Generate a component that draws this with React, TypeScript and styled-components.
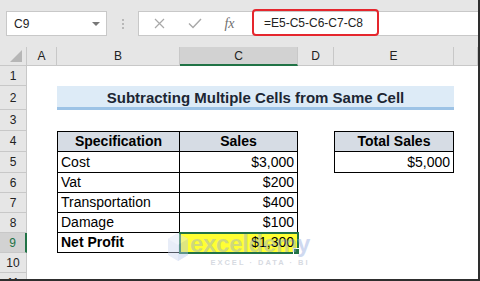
import React from "react";
import styled, { createGlobalStyle, css } from "styled-components";

const GlobalStyle = createGlobalStyle`
  html, body { margin: 0; padding: 0; background: #fff; }
  #root { width: 480px; height: 281px; }
`;

const Frame = styled.div`
  position: relative;
  width: 480px;
  height: 281px;
  box-sizing: border-box;
  border-right: 2px solid #2e2e2e;
  border-bottom: 2px solid #2e2e2e;
  background: #e6e6e6;
  display: flex;
  flex-direction: column;
  overflow: hidden;
  font-family: "Liberation Sans", Arial, sans-serif;
  color: #000;
`;

const Toolbar = styled.div`
  height: 47px;
  flex: none;
  box-sizing: border-box;
  padding: 11px 0 0 6px;
  display: flex;
  align-items: flex-start;
`;

const NameBox = styled.div`
  width: 101px;
  height: 25px;
  box-sizing: border-box;
  background: #fff;
  border: 1px solid #c8c8c8;
  display: flex;
  align-items: center;
  justify-content: space-between;
  padding: 0 6px 0 7px;
  font-size: 12px;
  color: #222;
`;

const Caret = styled.span`
  width: 0;
  height: 0;
  border-left: 4px solid transparent;
  border-right: 4px solid transparent;
  border-top: 4px solid #777;
`;

const Grip = styled.div`
  width: 31px;
  height: 25px;
  display: flex;
  flex-direction: column;
  align-items: center;
  justify-content: center;
  gap: 2px;
`;

const Dot = styled.span`
  width: 2px;
  height: 2px;
  background: #b8b8b8;
`;

const FormulaBar = styled.div`
  flex: 1;
  height: 25px;
  box-sizing: border-box;
  background: #fff;
  border: 1px solid #c8c8c8;
  border-right: none;
  display: flex;
  align-items: flex-start;
  padding-left: 3px;
`;

const IconSlot = styled.span`
  width: 35px;
  height: 23px;
  display: flex;
  align-items: center;
  justify-content: center;
  color: #9c9c9c;
`;

const Fx = styled.span`
  font-family: "Liberation Serif", "Times New Roman", serif;
  font-style: italic;
  font-size: 14px;
  color: #6f6f6f;
`;

const FormulaHighlight = styled.div`
  margin-top: -3px;
  margin-left: 5px;
  width: 127px;
  height: 27px;
  box-sizing: border-box;
  border: 2px solid #e5262d;
  border-radius: 4px;
  display: flex;
  align-items: center;
  padding-left: 10px;
  font-size: 12px;
  color: #222;
`;

const Sheet = styled.div`
  flex: 1;
  position: relative;
  display: grid;
  background: #fff;
  grid-template-columns: 27px 30px 123px 118px 36px 120px 1fr;
  grid-template-rows: 19px 20px 24px 21px 21px 21px 20px 20px 20px 20px 20px 20px;
  overflow: hidden;
`;

const Corner = styled.div`
  position: relative;
  background: #e6e6e6;
  border-right: 1px solid #c8c8c8;
  border-bottom: 1px solid #c8c8c8;
  &::after {
    content: "";
    position: absolute;
    right: 4px;
    bottom: 3px;
    width: 0;
    height: 0;
    border-left: 12px solid transparent;
    border-bottom: 12px solid #b6b6b6;
  }
`;

const ColHead = styled.div<{ $active?: boolean }>`
  box-sizing: border-box;
  background: ${(p) => (p.$active ? "#d2d2d2" : "#e6e6e6")};
  border-right: 1px solid #c8c8c8;
  border-bottom: ${(p) => (p.$active ? "2px solid #217346" : "1px solid #c8c8c8")};
  display: flex;
  align-items: center;
  justify-content: center;
  font-size: 12px;
  color: #222;
`;

const RowHead = styled.div<{ $active?: boolean }>`
  box-sizing: border-box;
  background: ${(p) => (p.$active ? "#d2d2d2" : "#e6e6e6")};
  border-right: ${(p) => (p.$active ? "2px solid #217346" : "1px solid #c8c8c8")};
  border-bottom: 1px solid #c8c8c8;
  display: flex;
  align-items: center;
  justify-content: center;
  font-size: 12px;
  color: ${(p) => (p.$active ? "#217346" : "#222")};
`;

type Align = "left" | "right" | "center";

const Cell = styled.div<{
  $align?: Align;
  $bold?: boolean;
  $head?: boolean;
  $boxed?: boolean;
  $top?: boolean;
  $left?: boolean;
  $selected?: boolean;
}>`
  position: relative;
  box-sizing: border-box;
  display: flex;
  align-items: flex-end;
  padding: 0 3px 2px 3px;
  font-size: 14px;
  white-space: nowrap;
  justify-content: ${(p) =>
    p.$align === "right" ? "flex-end" : p.$align === "center" ? "center" : "flex-start"};
  font-weight: ${(p) => (p.$bold ? 700 : 400)};
  background: ${(p) => (p.$selected ? "#ffff33" : p.$head ? "#d6dce4" : "transparent")};
  ${(p) =>
    p.$boxed &&
    css`
      border-right: 1px solid #000;
      border-bottom: 1px solid #000;
    `}
  ${(p) => p.$top && css`border-top: 1px solid #000;`}
  ${(p) => p.$left && css`border-left: 1px solid #000;`}
  ${(p) =>
    p.$selected &&
    css`
      outline: 2px solid #217346;
      outline-offset: -1px;
      &::after {
        content: "";
        position: absolute;
        right: -3px;
        bottom: -3px;
        width: 5px;
        height: 5px;
        background: #217346;
        border: 1px solid #fff;
      }
    `}
`;

const Title = styled.div`
  grid-column: span 4;
  box-sizing: border-box;
  background: #ddebf7;
  border-bottom: 3px solid #9dc3e6;
  display: flex;
  align-items: center;
  justify-content: center;
  font-size: 15px;
  font-weight: 700;
  color: #1c2633;
  padding-top: 2px;
`;

const Watermark = styled.div`
  position: absolute;
  left: 167px;
  top: 185px;
  display: flex;
  align-items: flex-start;
  gap: 1px;
  pointer-events: none;
  opacity: 0.42;
`;

const WmText = styled.div`
  display: flex;
  flex-direction: column;
  align-items: center;
`;

const WmWord = styled.span`
  font-family: "Liberation Sans", Arial, sans-serif;
  font-weight: 700;
  font-size: 24px;
  line-height: 24px;
  color: #8fa6dc;
  letter-spacing: -0.3px;
`;

const WmTag = styled.span`
  font-family: "Liberation Sans", Arial, sans-serif;
  font-weight: 700;
  font-size: 7.5px;
  letter-spacing: 2px;
  color: #a0a8b8;
  margin-top: 2px;
  padding-left: 20px;
`;

type C = {
  text?: string;
  align?: Align;
  bold?: boolean;
  head?: boolean;
  boxed?: boolean;
  top?: boolean;
  left?: boolean;
  selected?: boolean;
};

const cols = ["A", "B", "C", "D", "E", "F"];

const data: Record<number, Record<string, C>> = {
  4: {
    B: { text: "Specification", align: "center", bold: true, head: true, boxed: true, top: true, left: true },
    C: { text: "Sales", align: "center", bold: true, head: true, boxed: true, top: true },
    E: { text: "Total Sales", align: "center", bold: true, head: true, boxed: true, top: true, left: true },
  },
  5: {
    B: { text: "Cost", boxed: true, left: true },
    C: { text: "$3,000", align: "right", boxed: true },
    E: { text: "$5,000", align: "right", boxed: true, left: true },
  },
  6: {
    B: { text: "Vat", boxed: true, left: true },
    C: { text: "$200", align: "right", boxed: true },
  },
  7: {
    B: { text: "Transportation", boxed: true, left: true },
    C: { text: "$400", align: "right", boxed: true },
  },
  8: {
    B: { text: "Damage", boxed: true, left: true },
    C: { text: "$100", align: "right", boxed: true },
  },
  9: {
    B: { text: "Net Profit", bold: true, boxed: true, left: true },
    C: { text: "$1,300", align: "right", boxed: true, selected: true },
  },
};

const rows = [1, 2, 3, 4, 5, 6, 7, 8, 9, 10, 11];

function Row({ n }: { n: number }) {
  const cells: React.ReactNode[] = [
    <RowHead key="h" $active={n === 9}>
      {n}
    </RowHead>,
  ];
  if (n === 2) {
    cells.push(<Cell key="A" />);
    cells.push(<Title key="t">Subtracting Multiple Cells from Same Cell</Title>);
    cells.push(<Cell key="F" />);
  } else {
    cols.forEach((c) => {
      const d = data[n]?.[c] ?? {};
      cells.push(
        <Cell
          key={c}
          $align={d.align}
          $bold={d.bold}
          $head={d.head}
          $boxed={d.boxed}
          $top={d.top}
          $left={d.left}
          $selected={d.selected}
        >
          {d.text}
        </Cell>
      );
    });
  }
  return <>{cells}</>;
}

export default function App() {
  return (
    <Frame>
      <GlobalStyle />
      <Toolbar>
        <NameBox>
          <span>C9</span>
          <Caret />
        </NameBox>
        <Grip>
          <Dot />
          <Dot />
          <Dot />
        </Grip>
        <FormulaBar>
          <IconSlot>
            <svg width="11" height="11" viewBox="0 0 11 11">
              <path d="M1 1 L10 10 M10 1 L1 10" stroke="#a8a8a8" strokeWidth="1.2" fill="none" />
            </svg>
          </IconSlot>
          <IconSlot>
            <svg width="14" height="11" viewBox="0 0 14 11">
              <path d="M1 5.5 L5 9.5 L13 1" stroke="#a8a8a8" strokeWidth="1.4" fill="none" />
            </svg>
          </IconSlot>
          <IconSlot>
            <Fx>fx</Fx>
          </IconSlot>
          <FormulaHighlight>=E5-C5-C6-C7-C8</FormulaHighlight>
        </FormulaBar>
      </Toolbar>
      <Sheet>
        <Corner />
        {cols.map((c) => (
          <ColHead key={c} $active={c === "C"}>
            {c === "F" ? "" : c}
          </ColHead>
        ))}
        {rows.map((n) => (
          <Row key={n} n={n} />
        ))}
        <Watermark>
          <svg width="22" height="30" viewBox="0 0 22 30">
            <path d="M11 1 L21 7 L21 23 L11 29 L1 23 L1 7 Z" fill="#c9d5f0" />
            <path d="M11 1 L21 7 L11 13 L1 7 Z" fill="#dbe3f6" />
            <path d="M11 13 L21 7 L21 23 L11 29 Z" fill="#b3c4ea" />
          </svg>
          <WmText>
            <WmWord>exceldemy</WmWord>
            <WmTag>EXCEL · DATA · BI</WmTag>
          </WmText>
        </Watermark>
      </Sheet>
    </Frame>
  );
}
